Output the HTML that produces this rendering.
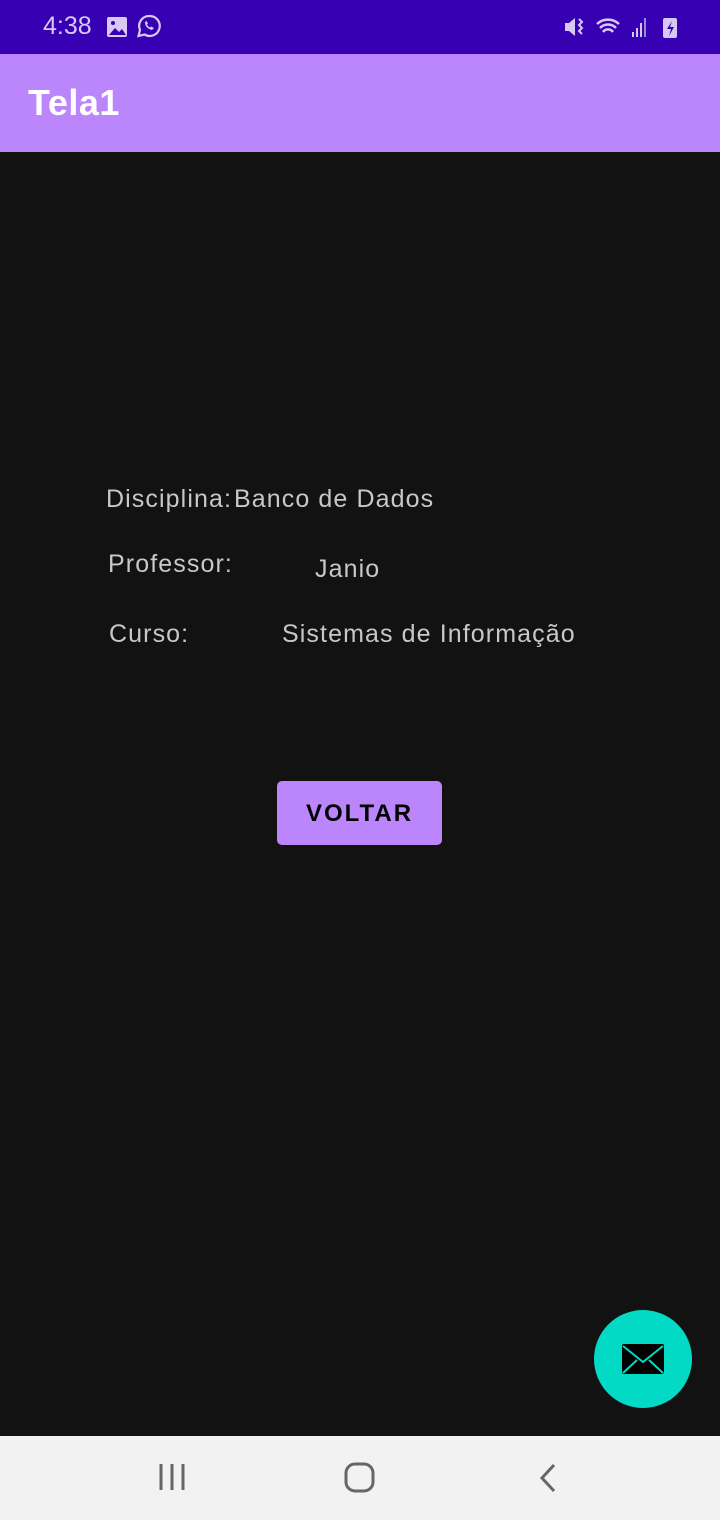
<!DOCTYPE html>
<html><head><meta charset="utf-8"><style>
body{margin:0;width:720px;height:1520px;background:#121212;position:relative;overflow:hidden;font-family:"Liberation Sans",Roboto,sans-serif}
.sb{position:absolute;top:0;left:0;width:720px;height:54px;background:#3700b3;color:#d8c8f4}
.ab{position:absolute;top:54px;left:0;width:720px;height:98px;background:#bb86fc}
.t{position:absolute;color:#c8c8c8;font-size:25px;line-height:30px;letter-spacing:1.1px}
.nav{position:absolute;top:1436px;left:0;width:720px;height:84px;background:#f2f2f2}
</style></head><body>
<div class="sb">
<div style="position:absolute;left:43px;top:12px;font-size:25px">4:38</div>
<svg style="position:absolute;left:106px;top:16px" width="22" height="22"><rect x="1" y="1" width="20" height="20" rx="2" fill="#d8c8f4"/><path d="M3 19l6-7 4 4 3-3 4 6z" fill="#3700b3"/><circle cx="7" cy="7" r="2" fill="#3700b3"/></svg>
<svg style="position:absolute;left:137px;top:14px" width="24" height="26"><path d="M12 2a10 10 0 0 0-9 14l-1.5 6 6-1.5A10 10 0 1 0 12 2z" fill="none" stroke="#d8c8f4" stroke-width="2.2"/><path d="M8 8q0 6 7 8l2-2-3-1.5-1 1q-2-1-3-3l1-1L9.5 7z" fill="#d8c8f4"/></svg>
<svg style="position:absolute;left:563px;top:14px" width="120" height="26"><path d="M2 9h4l6-5v18l-6-5H2z" fill="#d8c8f4"/><path d="M16 5l3 3-3 3 3 3-3 3 3 3" fill="none" stroke="#d8c8f4" stroke-width="2"/><path d="M34 10a16 16 0 0 1 22 0M37 14a11 11 0 0 1 16 0M40 18a6 6 0 0 1 10 0" fill="none" stroke="#d8c8f4" stroke-width="2.5"/><rect x="69" y="18" width="2" height="5" fill="#d8c8f4"/><rect x="73" y="14" width="2" height="9" fill="#d8c8f4"/><rect x="77" y="9" width="2" height="14" fill="#d8c8f4"/><rect x="81" y="4" width="2" height="19" fill="#9a88d0"/><rect x="100" y="4" width="14" height="20" rx="2" fill="#d8c8f4"/><path d="M109 7l-5 8h4l-2 7 5-9h-4z" fill="#3700b3"/></svg>
</div>
<div class="ab"><div style="position:absolute;left:28px;top:28px;color:#fff;font-size:36px;font-weight:bold;letter-spacing:0.5px">Tela1</div></div>
<div class="t" style="left:106px;top:484px">Disciplina:</div>
<div class="t" style="left:234px;top:484px">Banco de Dados</div>
<div class="t" style="left:108px;top:549px">Professor:</div>
<div class="t" style="left:315px;top:554px">Janio</div>
<div class="t" style="left:109px;top:619px">Curso:</div>
<div class="t" style="left:282px;top:619px">Sistemas de Informação</div>
<div style="position:absolute;left:277px;top:781px;width:165px;height:64px;background:#bb86fc;border-radius:5px;color:#000;font-size:24px;font-weight:bold;letter-spacing:2px;text-align:center;line-height:66px">VOLTAR</div>
<div style="position:absolute;left:594px;top:1310px;width:98px;height:98px;border-radius:50%;background:#03dac5"></div>
<svg style="position:absolute;left:621px;top:1343px" width="44" height="32"><rect x="1" y="1" width="42" height="30" rx="2" fill="#000"/><path d="M2 3l20 16 20-16M2 30l14-13M42 30L28 17" fill="none" stroke="#03dac5" stroke-width="2"/></svg>
<div class="nav">
<svg style="position:absolute;left:158px;top:26px" width="30" height="30"><path d="M3 2v26M14 2v26M25 2v26" stroke="#666" stroke-width="3"/></svg>
<svg style="position:absolute;left:344px;top:26px" width="32" height="32"><rect x="2" y="2" width="27" height="27" rx="9" fill="none" stroke="#666" stroke-width="3"/></svg>
<svg style="position:absolute;left:536px;top:26px" width="24" height="32"><path d="M18 3L6 16l12 13" fill="none" stroke="#666" stroke-width="3"/></svg>
</div>
</body></html>
